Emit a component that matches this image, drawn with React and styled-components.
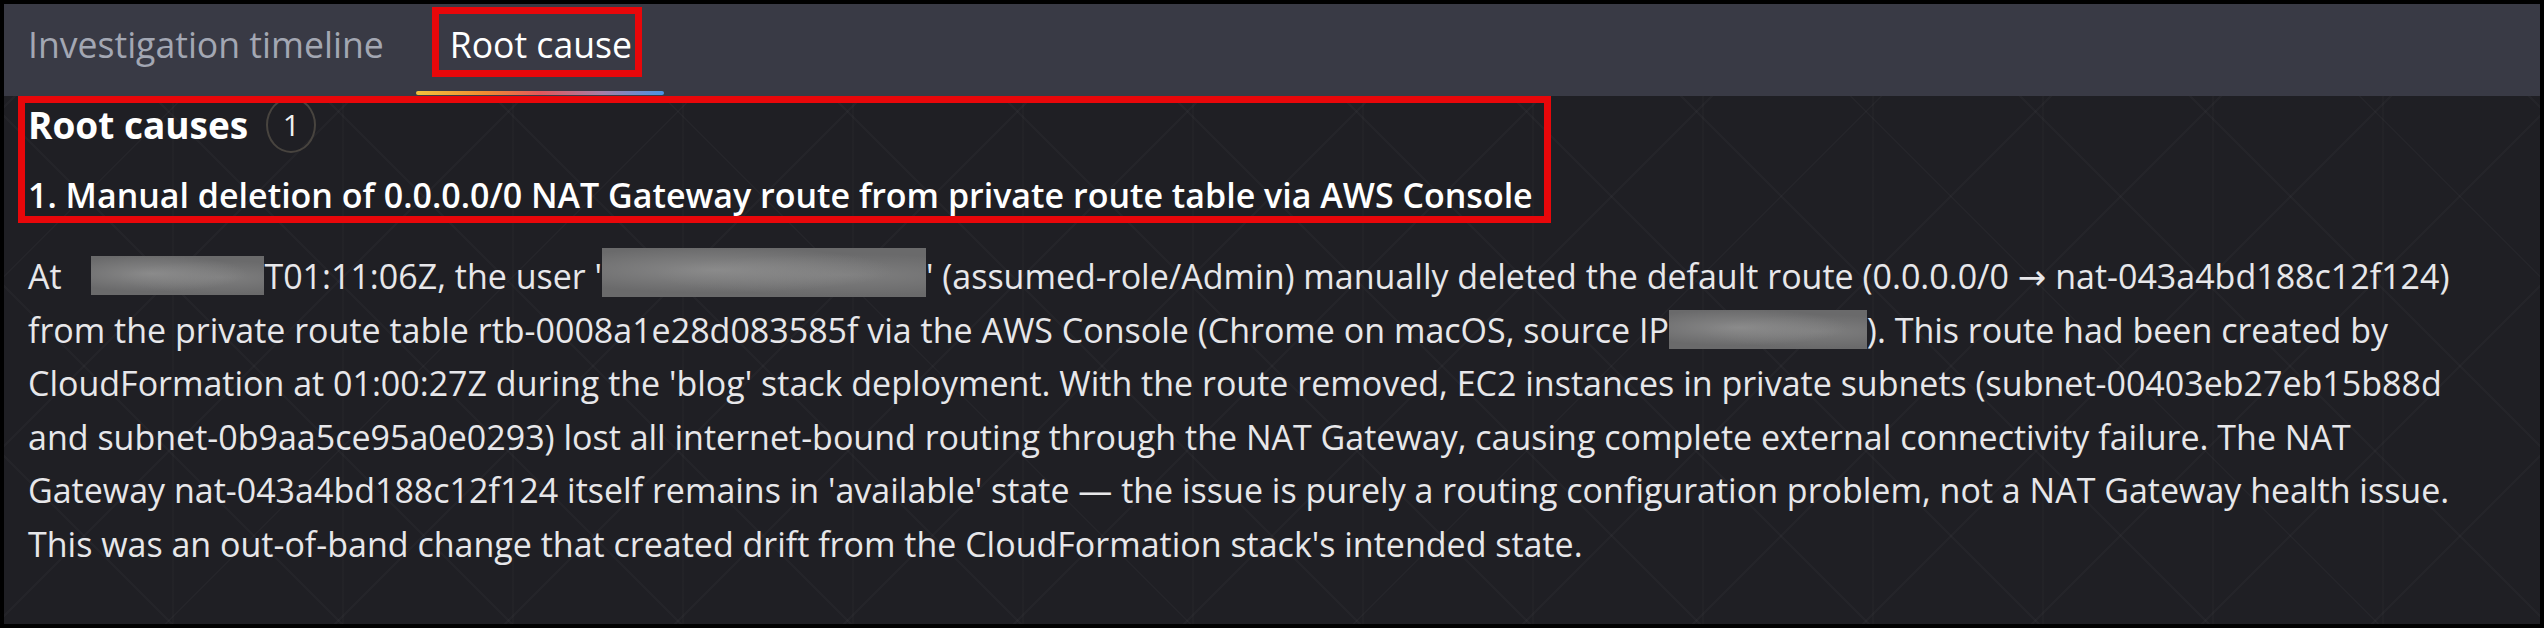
import React from "react";
import styled, { createGlobalStyle, css } from "styled-components";

const GlobalStyle = createGlobalStyle`
  html, body {
    margin: 0;
    padding: 0;
    background: #000;
  }
  body {
    font-family: "Open Sans", "Noto Sans", "DejaVu Sans", sans-serif;
  }
`;

const Frame = styled.div`
  width: 2544px;
  height: 628px;
  box-sizing: border-box;
  border: 4px solid #000;
  display: flex;
  flex-direction: column;
  overflow: hidden;
  background: #1f1f24;
`;

const TabBar = styled.div`
  display: flex;
  flex-shrink: 0;
  height: 92px;
  background: #393a45;
`;

const Tab = styled.div`
  position: relative;
  display: flex;
  align-items: center;
  padding: 0 32px 12px 34px;
  font-size: 35.6px;
  font-weight: 500;
  color: ${props => props.$active ? '#ffffff' : '#a3a7b3'};

  &:first-child {
    padding-left: 24px;
  }

  ${props => props.$active && css`
    &::after {
      content: "";
      position: absolute;
      left: 0;
      right: 0;
      bottom: 1px;
      height: 4px;
      border-radius: 2px;
      background: linear-gradient(90deg, #f2c23c 0%, #f08a32 28%, #e2585c 50%, #a57fa6 75%, #4a94e4 100%);
    }
  `}
`;

// red annotation frame drawn over the screenshot
const Highlight = styled.span`
  position: absolute;
  top: ${props => props.$top}px;
  left: ${props => props.$left}px;
  width: ${props => props.$w}px;
  height: ${props => props.$h}px;
  box-sizing: border-box;
  border: 7px solid #e8070a;
  pointer-events: none;
`;

const Content = styled.div`
  flex: 1;
  padding: 1px 24px 0;
  background-color: #1f1f24;
  background-image:
    repeating-linear-gradient(45deg, transparent 0 118px, rgba(255, 255, 255, 0.022) 118px 120px),
    repeating-linear-gradient(-45deg, transparent 0 118px, rgba(255, 255, 255, 0.022) 118px 120px),
    repeating-linear-gradient(90deg, transparent 0 168px, rgba(255, 255, 255, 0.015) 168px 170px);
  color: #e7e7ea;
`;

const HeaderGroup = styled.div`
  position: relative;
`;

const Title = styled.h2`
  margin: 0;
  display: flex;
  align-items: center;
  gap: 18px;
  font-size: 37px;
  font-weight: 700;
  line-height: 50px;
  color: #ffffff;
`;

const Counter = styled.span`
  width: 50px;
  height: 56px;
  box-sizing: border-box;
  border: 2px solid #48443f;
  border-radius: 50%;
  display: flex;
  align-items: center;
  justify-content: center;
  font-size: 30px;
  font-weight: 400;
  color: #f0f0f0;
`;

const CauseTitle = styled.h3`
  margin: 19px 0 0;
  font-size: 34px;
  font-weight: 600;
  line-height: 46px;
  color: #ffffff;
`;

const Description = styled.p`
  margin: 30px 0 0;
  font-size: 34px;
  line-height: 53.5px;
  white-space: nowrap;
`;

const Redacted = styled.span`
  display: inline-block;
  vertical-align: ${props => props.$va}px;
  width: ${props => props.$w}px;
  height: ${props => props.$h}px;
  margin-left: ${props => props.$ml || 0}px;
  background:
    radial-gradient(ellipse at 35% 45%, rgba(150, 150, 150, 0.7), transparent 60%),
    radial-gradient(ellipse at 75% 55%, rgba(140, 140, 140, 0.6), transparent 55%),
    #6a6a6b;
`;

const App = () => {
  return (
    <>
      <GlobalStyle />
      <Frame>
        <TabBar>
          <Tab>Investigation timeline</Tab>
          <Tab $active>
            Root cause
            <Highlight $top={3} $left={16} $w={210} $h={70} />
          </Tab>
        </TabBar>
        <Content>
          <HeaderGroup>
            <Title>
              Root causes
              <Counter>1</Counter>
            </Title>
            <CauseTitle>
              1. Manual deletion of 0.0.0.0/0 NAT Gateway route from private route table via AWS Console
            </CauseTitle>
            <Highlight $top={-1} $left={-10} $w={1533} $h={127} />
          </HeaderGroup>
          <Description>
            At <Redacted $w={173} $h={39} $ml={21} $va={-6} />T01:11:06Z, the user '<Redacted $w={324} $h={49} $va={-8} />' (assumed-role/Admin) manually deleted the default route (0.0.0.0/0 → nat-043a4bd188c12f124)
            <br />
            from the private route table rtb-0008a1e28d083585f via the AWS Console (Chrome on macOS, source IP<Redacted $w={198} $h={39} $va={-6} />). This route had been created by
            <br />
            CloudFormation at 01:00:27Z during the 'blog' stack deployment. With the route removed, EC2 instances in private subnets (subnet-00403eb27eb15b88d
            <br />
            and subnet-0b9aa5ce95a0e0293) lost all internet-bound routing through the NAT Gateway, causing complete external connectivity failure. The NAT
            <br />
            Gateway nat-043a4bd188c12f124 itself remains in 'available' state — the issue is purely a routing configuration problem, not a NAT Gateway health issue.
            <br />
            This was an out-of-band change that created drift from the CloudFormation stack's intended state.
          </Description>
        </Content>
      </Frame>
    </>
  );
};

export default App;
